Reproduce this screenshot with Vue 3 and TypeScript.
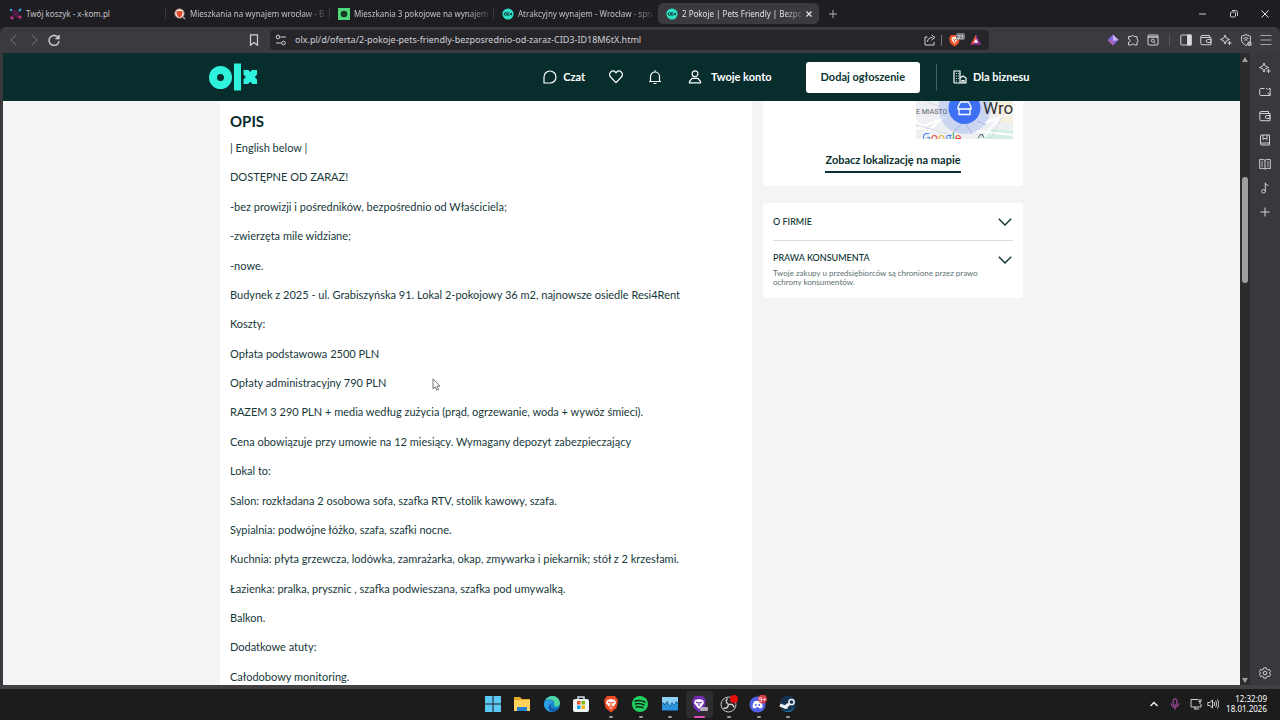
<script setup lang="ts">
interface Tab {
  title: string
  icon: 'xkom' | 'brave' | 'square' | 'olx'
  active?: boolean
}

const tabs: Tab[] = [
  { title: 'Twój koszyk - x-kom.pl', icon: 'xkom' },
  { title: 'Mieszkania na wynajem wrocław - Br', icon: 'brave' },
  { title: 'Mieszkania 3 pokojowe na wynajem:', icon: 'square' },
  { title: 'Atrakcyjny wynajem - Wrocław - spra', icon: 'olx' },
  { title: '2 Pokoje | Pets Friendly | Bezpoś', icon: 'olx', active: true },
]

const url = 'olx.pl/d/oferta/2-pokoje-pets-friendly-bezposrednio-od-zaraz-CID3-ID18M6tX.html'

const description: string[] = [
  '| English below |',
  'DOSTĘPNE OD ZARAZ!',
  '-bez prowizji i pośredników, bezpośrednio od Właściciela;',
  '-zwierzęta mile widziane;',
  '-nowe.',
  'Budynek z 2025 - ul. Grabiszyńska 91. Lokal 2-pokojowy 36 m2, najnowsze osiedle Resi4Rent',
  'Koszty:',
  'Opłata podstawowa 2500 PLN',
  'Opłaty administracyjny 790 PLN',
  'RAZEM 3 290 PLN + media według zużycia (prąd, ogrzewanie, woda + wywóz śmieci).',
  'Cena obowiązuje przy umowie na 12 miesiący. Wymagany depozyt zabezpieczający',
  'Lokal to:',
  'Salon: rozkładana 2 osobowa sofa, szafka RTV, stolik kawowy, szafa.',
  'Sypialnia: podwójne łóżko, szafa, szafki nocne.',
  'Kuchnia: płyta grzewcza, lodówka, zamrażarka, okap, zmywarka i piekarnik; stół z 2 krzesłami.',
  'Łazienka: pralka, prysznic , szafka podwieszana, szafka pod umywalką.',
  'Balkon.',
  'Dodatkowe atuty:',
  'Całodobowy monitoring.',
]
</script>

<template>
  <div class="desktop">
    <nav class="tabs" aria-label="Karty">
      <button v-for="tab in tabs" :key="tab.title" class="tab" :class="{ active: tab.active }">
        <svg v-if="tab.icon === 'xkom'" class="fav" viewBox="0 0 12 12">
          <path d="M1 1l4 5-4 5M11 1L7 6l4 5" fill="none" stroke="#3a2146" stroke-width="2" />
          <path d="M0 2h2M9 3l2-2" stroke="#27b8d8" stroke-width="2" />
          <path d="M4 2l4 8M1 8l-1 2M8 3l-4 6" stroke="#5b1a4d" stroke-width="2" />
          <path d="M1 9l2 2M9 8l2 2" stroke="#e0358c" stroke-width="2" />
        </svg>
        <svg v-else-if="tab.icon === 'brave'" class="fav" viewBox="0 0 12 12">
          <circle cx="5.5" cy="5.5" r="4.6" fill="#f4efed" stroke="#b8968a" stroke-width="1" />
          <path d="M3 3h5l.6 1.4L7.7 8 5.500 9.500 3.300 8 2.400 4.400z" fill="#df4b2b" />
          <path d="M9 9l2 2" stroke="#c4a79d" stroke-width="1.200" />
        </svg>
        <svg v-else-if="tab.icon === 'square'" class="fav" viewBox="0 0 12 12">
          <path d="M0 0h12v12H0z" fill="#4fd97a" />
          <circle cx="6" cy="6" r="3.300" fill="#153b26" />
        </svg>
        <svg v-else class="fav" viewBox="0 0 12 12">
          <circle cx="6" cy="6" r="5.600" fill="#2ee0c6" />
          <circle cx="3.600" cy="6" r="1.400" fill="none" stroke="#06302e" stroke-width="1" />
          <path d="M6 4v4M7.500 5l2.500 2.200M10 5L7.500 7.200" stroke="#06302e" stroke-width="1" />
        </svg>
        <span class="tab-title">{{ tab.title }}</span>
        <svg v-if="tab.active" class="close" viewBox="0 0 8 8">
          <path d="M1.500 1.500l5 5M6.500 1.500l-5 5" stroke="#e6e6e8" stroke-width="1.200" />
        </svg>
      </button>
      <button class="new-tab" aria-label="Nowa karta">
        <svg viewBox="0 0 8 8" width="8" height="8"><path d="M4 0v8M0 4h8" stroke="#aeadb2" stroke-width="1" /></svg>
      </button>
      <div class="window-buttons">
        <button aria-label="Minimalizuj"><svg viewBox="0 0 8 8"><path d="M0 4h7" stroke="#c9c9cc" /></svg></button>
        <button aria-label="Przywróć">
          <svg viewBox="0 0 8 8"><rect x=".5" y="2" width="5" height="5" rx="1" fill="none" stroke="#c9c9cc" /><path d="M2 .5h3.500a2 2 0 0 1 2 2V6" fill="none" stroke="#c9c9cc" /></svg>
        </button>
        <button aria-label="Zamknij"><svg viewBox="0 0 8 8"><path d="M.5.5l7 7M7.500.5l-7 7" stroke="#e0e0e2" /></svg></button>
      </div>
    </nav>

    <div class="toolbar">
      <div class="nav-buttons">
        <button class="ic" aria-label="Wstecz"><svg viewBox="0 0 12 12"><path d="M8 1L3 6l5 5" stroke="#77767b" /></svg></button>
        <button class="ic" aria-label="Dalej"><svg viewBox="0 0 12 12"><path d="M4 1l5 5-5 5" stroke="#77767b" /></svg></button>
        <button class="ic" aria-label="Odśwież"><svg viewBox="0 0 12 12"><path d="M10.500 4.200A5 5 0 1 0 11 7M11 1v3.500H7.500" stroke-width="1.400" /></svg></button>
      </div>
      <button class="ic bookmark" aria-label="Zakładka"><svg viewBox="0 0 12 12"><path d="M2.500.8h7v10.500L6 8.500l-3.500 2.800z" stroke-width="1.200" /></svg></button>
      <div class="address">
        <svg class="tune" viewBox="0 0 12 12"><circle cx="3" cy="3" r="1.800" /><path d="M5.500 3H11M1 9h5" /><circle cx="8.500" cy="9" r="1.800" /></svg>
        <input :value="url" aria-label="Adres strony" spellcheck="false" />
        <svg class="share" viewBox="0 0 12 12"><path d="M3.500 3H1v8h9V8M3.500 8c0-3 2-4.500 5-4.500M7.500 1L11 3.500 7.500 6.200" /></svg>
        <i class="bar"></i>
        <svg class="shield" viewBox="0 0 17 14">
          <path d="M3 2h7l2 3-1.300 5.500L6.500 13.500 2.300 10.500 1 5z" fill="#e8532b" />
          <path d="M4 4.500l2.500-1L9 4.500l.6 2.200-1.600 2-1.500 2-1.500-2-1.600-2z" fill="#fff0e8" />
          <path d="M5 6l1 .8M8 6l-1 .8M6.500 7v2" stroke="#e8532b" />
          <rect x="8" y="0" width="9" height="7" rx="2" fill="#77777c" />
          <text x="9" y="5.500" font-size="6" fill="#fff" stroke="none">21</text>
        </svg>
        <svg class="bat" viewBox="0 0 12 12">
          <path d="M6 .8L.5 10.800h11z" fill="#8b2d8f" /><path d="M6 .8L.5 10.800 6 8z" fill="#f0503a" /><path d="M6 4.800L3.800 8.800h4.400z" fill="#fff" />
        </svg>
      </div>
      <div class="extensions">
        <button class="ic" aria-label="Rozszerzenie"><svg viewBox="0 0 12 12"><path d="M6 .5L11.500 6 6 11.500.5 6z" fill="#8464dc" stroke="none" /><path d="M6 .5L11.500 6 6 7z" fill="#c7b2f6" stroke="none" /><path d="M.5 6L6 7v4.500z" fill="#b8629f" stroke="none" /></svg></button>
        <button class="ic" aria-label="Rozszerzenia"><svg viewBox="0 0 12 12"><path d="M1.500 2.500h2.700a1.600 1.600 0 0 1 3 0h2.800v2.600a1.500 1.500 0 0 1 0 2.900v3H7.300a1.500 1.500 0 0 0-2.900 0H1.500V8.300a1.600 1.600 0 0 0 0-3.200z" /></svg></button>
        <button class="ic" aria-label="Szukaj na stronie"><svg viewBox="0 0 12 12"><rect x="1" y="1" width="10" height="10" rx="1" /><path d="M1 3h10" stroke-width="1.500" /><circle cx="5.800" cy="6.600" r="1.500" /><path d="M7 8l1.400 1.400" /></svg></button>
        <i class="bar dim"></i>
        <button class="ic" aria-label="Panel boczny"><svg viewBox="0 0 12 12"><rect x=".8" y="1" width="10.400" height="10" rx="1" /><path d="M7.500 1h3.700v10H7.500z" fill="#dedee0" /></svg></button>
        <button class="ic" aria-label="Portfel"><svg viewBox="0 0 12 12"><path d="M9.500 3.500V1.500H2a1 1 0 0 0 0 2h9v7.200H1.800a1 1 0 0 1-1-1V2.500M11 5.500H7.800a1.500 1.500 0 0 0 0 3H11z" /></svg></button>
        <button class="ic" aria-label="Leo"><svg viewBox="0 0 12 12"><path d="M5 1l1.300 3.200L9.500 5.500 6.300 6.800 5 10 3.700 6.800.5 5.500l3.200-1.300zM9.500 7v4M7.500 9h4" /></svg></button>
        <button class="ic" aria-label="VPN"><svg viewBox="0 0 12 12"><path d="M6 .6l4.500 1.700v3.500C10.500 8.500 8 10.500 6 11.400 4 10.500 1.500 8.500 1.500 5.800V2.300z" /><path d="M3.500 4.500q2.500-1.800 5 0M4.500 6.200q1.500-1 3 0" /><circle cx="9.500" cy="9.800" r="2.200" fill="#cfcfd2" stroke="none" /><path d="M8.500 9.800h2" stroke="#444" /></svg></button>
        <button class="ic" aria-label="Menu"><svg viewBox="0 0 12 12"><path d="M.5 1.500h11M.5 6h11M.5 10.500h11" stroke="#a5a4a9" /></svg></button>
      </div>
    </div>

    <div class="body">
      <div class="page">
        <header class="site-header">
          <div class="header-inner">
            <a href="#" class="logo" aria-label="Strona główna">
              <svg viewBox="0 0 48 28" width="48" height="28">
                <circle cx="11.500" cy="14.500" r="7.500" fill="none" stroke="#2ff2dc" stroke-width="8" />
                <path d="M25 .5h7v27h-7z" fill="#2ff2dc" />
                <path d="M35 7h4.500l1.700 2 1.800-2H48v4.500L45.700 14l2.300 2.500V21h-4.500l-2.200-2.200L39 21h-4.500v-4.500l2.300-2.500-2.300-2.500V7z" fill="#2ff2dc" />
              </svg>
            </a>
            <nav class="site-nav" aria-label="Konto">
              <a href="#" class="chat"><svg viewBox="0 0 14 14"><path d="M1 13V7a6 6 0 1 1 6 6z" /></svg>Czat</a>
              <a href="#" class="heart" aria-label="Obserwowane"><svg viewBox="0 0 14 14"><path d="M7 12.600L1.600 7A3.400 3.400 0 0 1 1.800 2 3.300 3.300 0 0 1 6.300 2L7 2.800 7.700 2a3.300 3.300 0 0 1 4.500 0 3.400 3.400 0 0 1 .2 5z" /></svg></a>
              <a href="#" class="bell" aria-label="Powiadomienia"><svg viewBox="0 0 14 14"><path d="M1 11.500h12M2.500 11.500V6.500a4.500 4.500 0 0 1 9 0v5M7 2V.3M5.500 13.500h3" /></svg></a>
              <a href="#" class="account"><svg viewBox="0 0 14 14"><circle cx="7" cy="3.800" r="2.900" /><path d="M1.500 12.800v-1.300l2.600-3.200h5.800l2.600 3.200v1.300z" /></svg>Twoje konto</a>
              <button class="post">Dodaj ogłoszenie</button>
              <i class="rule"></i>
              <a href="#" class="business"><svg viewBox="0 0 14 14"><path d="M1 13V1h6v12M1 13h12V8l-3-2-3 2M3 3.500h.8M5 3.500h.8M3 6h.8M5 6h.8M3 8.500h.8M5 8.500h.8M3 11h.8M9 13v-2.500h2V13" /></svg>Dla biznesu</a>
            </nav>
          </div>
        </header>

        <main class="columns">
          <section class="description">
            <h1>OPIS</h1>
            <div class="lines">
              <p v-for="line in description" :key="line">{{ line }}</p>
            </div>
          </section>

          <aside class="side">
            <section class="card location">
              <svg class="map" viewBox="0 0 97 38" width="97" height="38" role="img" aria-label="Mapa">
                <path d="M0 0h97v38H0z" fill="#eef0f3" />
                <path d="M60 38L75 28l22 2v8z" fill="#d3efe2" />
                <path d="M78 0h19v22H84z" fill="#f6f1df" />
                <path d="M0 28l30-12M5 38l22-22M0 20l18 18M62 24l35-12M66 38L82 18M60 30l37 4" stroke="#fff" stroke-width="2" />
                <path d="M0 24l36 10M74 38l16-28M10 0l14 6" stroke="#d6dae4" fill="none" />
                <circle cx="48.500" cy="7" r="26" fill="#7899ee" fill-opacity=".3" />
                <path d="M38 30l8-7M50 23l6 10M61 20l9 4" stroke="#a8b6d9" />
                <circle cx="48.500" cy="7" r="16" fill="#3d70f2" />
                <path d="M43 7v6.500h11V7M42 6l2.500-5h8L55 6v2H42z" fill="none" stroke="#fff" stroke-width="1.300" />
                <text x="0" y="13" font-size="7" class="map-label" fill="#5c6068">E MIASTO</text>
                <text x="67" y="13" font-size="17" class="map-city" fill="#303134">Wro</text>
                <text x="6" y="41" font-size="12" class="map-brand"><tspan fill="#4285f4">G</tspan><tspan fill="#ea4335">o</tspan><tspan fill="#e8b21a">o</tspan><tspan fill="#4285f4">g</tspan><tspan fill="#34a853">l</tspan><tspan fill="#ea4335">e</tspan></text>
                <path d="M62 37l3-4 2 2M66 33l2 4" fill="none" stroke="#5f6368" />
              </svg>
              <a href="#" class="map-link">Zobacz lokalizację na mapie</a>
            </section>
            <section class="card info">
              <button class="row">
                <span class="row-title">O FIRMIE</span>
                <svg class="chevron" viewBox="0 0 14 8"><path d="M.8.8L7 7 13.200.8" /></svg>
              </button>
              <button class="row second">
                <span>
                  <span class="row-title">PRAWA KONSUMENTA</span>
                  <span class="row-note">Twoje zakupy u przedsiębiorców są chronione przez prawo ochrony konsumentów.</span>
                </span>
                <svg class="chevron" viewBox="0 0 14 8"><path d="M.8.8L7 7 13.200.8" /></svg>
              </button>
            </section>
          </aside>
        </main>
        <svg class="cursor" viewBox="0 0 9 13" width="9" height="13"><path d="M1 .8v10l2.300-2 1.500 3.400 1.700-.8L5 8.200h3z" fill="#fff" stroke="#666" stroke-width=".9" /></svg>
      </div>

      <div class="scrollbar">
        <svg viewBox="0 0 6 5"><path d="M3 0l3 5H0z" /></svg>
        <i class="before"></i><i class="thumb"></i><i class="after"></i>
        <svg viewBox="0 0 6 5"><path d="M0 0h6L3 5z" /></svg>
      </div>

      <nav class="sidebar" aria-label="Panel boczny">
        <button class="ic" aria-label="Leo"><svg viewBox="0 0 12 12"><path d="M5 1l1.300 3.200L9.500 5.500 6.300 6.800 5 10 3.700 6.800.5 5.500l3.200-1.300zM9.500 7v4M7.500 9h4" /></svg></button>
        <button class="ic" aria-label="Rozmowa"><svg viewBox="0 0 12 12"><path d="M5.500 2.500h-4l-.8.8v5.400l.8.800h9.700v-7H10L8.500 4M8.500 7l2.500 1.500M7 2.500h1" /></svg></button>
        <button class="ic" aria-label="Portfel"><svg viewBox="0 0 12 12"><path d="M9.500 3.500V1.500H2a1 1 0 0 0 0 2h9v7.200H1.800a1 1 0 0 1-1-1V2.500M11 5.500H7.800a1.500 1.500 0 0 0 0 3H11z" /></svg></button>
        <button class="ic" aria-label="Zakładki"><svg viewBox="0 0 12 12"><path d="M10.500 11H2.500a1 1 0 0 1-1-1V2a1 1 0 0 1 1-1h8v10M1.500 9h9M4 1v4.500L6 4.200l2 1.300V1" /></svg></button>
        <button class="ic" aria-label="Lista do czytania"><svg viewBox="0 0 12 12"><path d="M6 2.200Q3.500.8.7 1.500v9Q3.500 9.800 6 11q2.500-1.200 5.300-.5v-9Q8.500.8 6 2.200V11M2.300 4H4M2.300 6H4M2.300 8H4M8 4h1.700M8 6h1.700M8 8h1.700" /></svg></button>
        <button class="ic" aria-label="Playlista"><svg viewBox="0 0 12 12"><circle cx="4.500" cy="9.300" r="1.800" /><path d="M6.300 9.300V.8q.5 2.200 3 2.700" /></svg></button>
        <button class="ic" aria-label="Dodaj"><svg viewBox="0 0 12 12"><path d="M6 1.500v9M1.500 6h9" /></svg></button>
        <button class="ic settings" aria-label="Ustawienia"><svg viewBox="0 0 12 12"><path d="M4.800.8h2.400l.5 1.500 1.100.6 1.600-.4 1.100 2-1 1.500 1 1.500-1.100 2-1.600-.4-1.100.6-.5 1.500H4.800l-.5-1.500-1.100-.6-1.600.4-1.100-2 1-1.500-1-1.500 1.100-2 1.600.4 1.100-.6z" /><circle cx="6" cy="6" r="1.800" /></svg></button>
      </nav>
    </div>

    <footer class="taskbar">
      <div class="apps">
        <button aria-label="Start"><svg viewBox="0 0 18 18"><path d="M1 1h7.500v7.500H1zM9.500 1H17v7.500H9.500zM1 9.500h7.500V17H1zM9.500 9.500H17V17H9.500z" fill="#5bc8f4" /></svg></button>
        <button aria-label="Eksplorator plików"><svg viewBox="0 0 18 18"><path d="M1 2h6l2 2h8v12H1z" fill="#e5a823" /><path d="M1 5h16v11H1z" fill="#fbd35c" /><path d="M4 12h10v4H4z" fill="#2480cf" /></svg></button>
        <button aria-label="Edge"><svg viewBox="0 0 18 18"><circle cx="9" cy="9" r="8" fill="#1684cf" /><path d="M2 6C5-1 16-1 17 8c0 4-5 4.500-6 2 2-5-5-7-9-4z" fill="#4fd5a1" /><path d="M1 9c0-5 8-5 8-1-4 1-3 6 0 7.500L9 17C4 17 1 13 1 9z" fill="#2a9fe0" /><path d="M8 9c-1 4 3 6 7 4-1 2-3 4-6 4-5-2-4-7-1-8z" fill="#155ea8" /></svg></button>
        <button aria-label="Microsoft Store"><svg viewBox="0 0 18 18"><path d="M6 4V2h6v2" fill="none" stroke="#cfdfe8" stroke-width="1.500" /><rect x="1" y="4" width="16" height="13" rx="2" fill="#eef3f6" /><path d="M5 6h3.500v3.500H5z" fill="#f25022" /><path d="M9.500 6H13v3.500H9.500z" fill="#7fba00" /><path d="M5 10.500h3.500V14H5z" fill="#00a4ef" /><path d="M9.500 10.500H13V14H9.500z" fill="#ffb900" /></svg></button>
        <button class="running" aria-label="Brave"><svg viewBox="0 0 18 18"><path d="M5 1h8l3 4-1.500 8L9 17.500 3.500 13 2 5z" fill="#ee4b22" /><path d="M5 5l4-1 4 1 1 3-3 4-2 2-2-2-3-4z" fill="#fff" /><path d="M6 7l2 1M12 7l-2 1M9 7v4M7 11l2 1 2-1" stroke="#ee4b22" stroke-width="1.200" fill="none" /></svg></button>
        <button class="running" aria-label="Spotify"><svg viewBox="0 0 18 18"><circle cx="9" cy="9" r="8" fill="#20d160" /><path d="M4 6q5-1.500 10 1M4.500 9q4.500-1.300 8.500 1M5 12q4-1 7 .8" fill="none" stroke="#12231a" stroke-width="1.500" stroke-linecap="round" /></svg></button>
        <button class="running" aria-label="Monitor"><svg viewBox="0 0 18 18"><path d="M1 2h16v14H1z" fill="#154f86" /><path d="M1 2h16v6l-2-2-2 4-2-3-2 4-3-5-2 3-3-2z" fill="#8cd0f5" /><path d="M1 8l3 2 2-3 3 5 2-4 2 3 2-4 2 2v6H1z" fill="#2b92dc" /></svg></button>
        <button class="running current" aria-label="Brave, okno prywatne"><svg viewBox="0 0 18 18"><path d="M5 1h8l3 4-1.500 8L9 17.500 3.500 13 2 5z" fill="#6f2dae" /><path d="M5 5l4-1 4 1 1 3-3 4-2 2-2-2-3-4z" fill="#fff" /><path d="M6 7l2 1M12 7l-2 1M9 7v4" stroke="#6f2dae" stroke-width="1.200" /><rect x="10" y="12" width="8" height="4" rx="1" fill="#b5a9bd" /></svg></button>
        <button class="running" aria-label="OBS"><svg viewBox="0 0 18 18"><circle cx="8.500" cy="9.500" r="7.500" fill="#242426" stroke="#c9c9cb" /><path d="M8.500 9.500q-4-3-1-6M8.500 9.500q5-1 5.500 3M8.500 9.500q-1 5-5 3.500" fill="none" stroke="#c9c9cb" stroke-width="1.500" /><circle cx="14" cy="4" r="4" fill="#e80e0e" /></svg></button>
        <button class="running" aria-label="Discord"><svg viewBox="0 0 18 18"><circle cx="8.500" cy="9.500" r="8" fill="#5260e8" /><path d="M5 6.500q3.500-1.300 7 0 1.800 3 1.500 6-1.500 1-3 1l-.6-1.200H7.100L6.500 13.500q-1.500 0-3-1 0-3.500 1.500-6z" fill="#fff" /><circle cx="6.800" cy="10" r="1" fill="#5260e8" /><circle cx="10.200" cy="10" r="1" fill="#5260e8" /><circle cx="13.500" cy="4" r="4.500" fill="#d93a48" /><text x="9.500" y="6.500" font-size="7" fill="#fff">9+</text></svg></button>
        <button class="running" aria-label="Steam"><svg viewBox="0 0 18 18"><path d="M1 9a8 8 0 0 1 16-1c0 5-4 9-8 9-3 0-6-1.500-7-4z" fill="#16344f" /><path d="M2 13c2 3 9 6 14-2-1 4-4 6-7 6s-6-1.500-7-4z" fill="#2275ad" /><circle cx="12.500" cy="7" r="2.600" fill="#16344f" stroke="#f1f4f7" stroke-width="1.500" /><path d="M1 10l5 2 4-3" fill="none" stroke="#f1f4f7" stroke-width="3" /><circle cx="7" cy="12" r="2" fill="#f1f4f7" /></svg></button>
      </div>
      <div class="tray">
        <svg class="up" viewBox="0 0 12 12"><path d="M2.500 8L6 4.500 9.500 8" stroke="#eee" stroke-width="1.500" /></svg>
        <svg class="mic" viewBox="0 0 12 12"><rect x="4.200" y=".8" width="3.600" height="6.500" rx="1.800" stroke="#c154c4" /><path d="M2.300 5.500q0 3.700 3.700 3.700t3.700-3.700M6 9.200v2.300" stroke="#c154c4" /></svg>
        <svg viewBox="0 0 12 12"><path d="M8 1.500H1v7.500h10V6M4 11h5M5 9v2M9 1v2.500h2V1M10 3.500V6" /></svg>
        <svg viewBox="0 0 12 12"><path d="M.8 4.500h2L5.500 2v8L2.800 7.500h-2zM7 4q1.500 2 0 4M8.700 2.800q2.300 3.200 0 6.400M10.300 1.500q3.200 4.500 0 9" /></svg>
        <div class="clock"><time>12:32:09</time><time>18.01.2026</time></div>
      </div>
    </footer>
  </div>
</template>

<style>
body {
  margin: 0;
}
</style>

<style scoped>
* {
  box-sizing: border-box;
}
.desktop {
  display: flex;
  flex-direction: column;
  height: 100vh;
  overflow: hidden;
  background: #1e1d22;
  font-family: "Noto Sans", "Open Sans", sans-serif;
}
button {
  margin: 0;
  padding: 0;
  border: 0;
  background: none;
  color: inherit;
  font: inherit;
  text-align: left;
}
a {
  color: inherit;
  text-decoration: none;
}
svg {
  display: block;
  flex: none;
}
.tabs {
  display: flex;
  align-items: center;
  flex: none;
  height: 27px;
  padding-left: 2px;
}
.tab {
  display: flex;
  align-items: center;
  gap: 4px;
  flex: 0 1 164px;
  min-width: 0;
  height: 21px;
  padding: 0 6px 0 8px;
  border-radius: 5px;
  color: #c4c3c8;
  font-size: 8px;
  line-height: 12px;
  position: relative;
}
.tab:nth-child(-n+3)::after {
  content: "";
  position: absolute;
  right: 0;
  top: 5px;
  width: 1px;
  height: 11px;
  background: #3a393e;
}
.tab.active {
  flex-basis: 161px;
  background: #3b3a3f;
  color: #e4e3e7;
}
.fav {
  width: 12px;
  height: 12px;
}
.tab-title {
  flex: 1;
  min-width: 0;
  white-space: nowrap;
  mask-image: linear-gradient(to right, #000 85%, rgb(0 0 0 / 25%));
}
.tab:first-child .tab-title {
  mask-image: none;
}
.close {
  width: 8px;
  height: 8px;
}
.new-tab {
  padding: 4px;
  margin-left: 6px;
}
.window-buttons {
  display: flex;
  gap: 23px;
  margin-left: auto;
  padding-right: 11px;
}
.window-buttons svg {
  width: 8px;
  height: 8px;
  fill: none;
}
.toolbar {
  display: flex;
  align-items: center;
  flex: none;
  height: 26px;
  padding: 0 8px;
  background: #3b3a3f;
  border-radius: 6px 6px 0 0;
}
.ic svg,
.address svg,
.tray svg {
  width: 12px;
  height: 12px;
  fill: none;
  stroke: #d2d1d5;
  stroke-width: 1;
}
.nav-buttons {
  display: flex;
  gap: 8px;
}
.bookmark {
  margin-left: auto;
}
.address {
  display: flex;
  align-items: center;
  flex: 0 1 719px;
  height: 20px;
  margin-left: 10px;
  padding: 0 7px 0 5px;
  border-radius: 4px;
  background: #26252a;
}
.address input {
  flex: 1;
  min-width: 0;
  margin: 0 0 0 8px;
  padding: 0;
  border: 0;
  outline: 0;
  background: none;
  color: #d2d1d6;
  font: 9px/14px "Noto Sans", "Open Sans", sans-serif;
}
.bar {
  width: 1px;
  height: 11px;
  margin: 0 6px 0 5px;
  background: #77767b;
}
.bar.dim {
  margin: 0 2px;
  background: #58575c;
}
.address .shield {
  width: 17px;
  height: 14px;
  margin-right: 5px;
  stroke: none;
}
.address .bat {
  stroke: none;
}
.extensions {
  display: flex;
  align-items: center;
  justify-content: flex-end;
  gap: 8px;
  flex: 0 0 283px;
}
.body {
  display: flex;
  flex: 1;
  min-height: 0;
  padding-left: 3px;
  background: #39383d;
  border-bottom: 4px solid #414144;
}
.page {
  position: relative;
  display: flex;
  flex-direction: column;
  flex: 1;
  min-width: 0;
  background: #f2f4f5;
  color: #17383a;
  font-family: Lato, "Open Sans", sans-serif;
  overflow: hidden;
}
.site-header {
  flex: none;
  height: 48px;
  background: #072d2c;
  color: #fff;
}
.header-inner {
  display: flex;
  align-items: center;
  justify-content: space-between;
  max-width: 826px;
  height: 100%;
  margin: 0 auto;
  padding-right: 5px;
}
.site-nav {
  display: flex;
  align-items: center;
  font-size: 11px;
  line-height: 16px;
  font-weight: 700;
}
.site-nav a {
  display: flex;
  align-items: center;
  gap: 6px;
}
.site-nav svg {
  width: 14px;
  height: 14px;
  fill: none;
  stroke: #fff;
  stroke-width: 1.2;
}
.site-nav .heart {
  margin-left: 24px;
}
.site-nav .bell {
  margin-left: 25px;
}
.site-nav .account {
  gap: 9px;
  margin-left: 26px;
}
.post {
  height: 31px;
  margin-left: 34px;
  padding: 0 15px;
  border-radius: 3px;
  background: #fff;
  color: #0c3533;
}
.rule {
  width: 1px;
  height: 27px;
  margin: 0 16px;
  background: #47615f;
}
.columns {
  display: grid;
  grid-template-columns: 532fr 260fr;
  flex: 1;
  gap: 11px;
  width: 100%;
  max-width: 803px;
  min-height: 0;
  margin: 0 auto;
}
.description {
  display: flex;
  flex-direction: column;
  min-width: 0;
  padding: 10px 10px 0;
  background: #fff;
}
h1 {
  margin: 0 0 9px;
  font-size: 15px;
  line-height: 20px;
  font-weight: 700;
  color: #062b2b;
}
.lines {
  display: flex;
  flex-direction: column;
  justify-content: space-between;
  flex: 1;
}
.lines p {
  margin: 0;
  font-size: 11px;
  line-height: 16px;
  white-space: nowrap;
}
.side {
  min-width: 0;
}
.card {
  padding: 0 10px;
  border-radius: 0 0 3px 3px;
  background: #fff;
}
.location {
  display: flex;
  flex-direction: column;
  align-items: center;
  padding-bottom: 13px;
}
.map {
  align-self: flex-end;
}
.map-label {
  font-family: Roboto, sans-serif;
  font-weight: 400;
}
.map-city {
  font-family: Roboto, sans-serif;
  font-weight: 400;
}
.map-brand {
  font-family: "Open Sans", sans-serif;
  font-weight: 500;
}
.map-link {
  margin-top: 13px;
  padding-bottom: 3px;
  border-bottom: 2px solid #0a302f;
  color: #0a302f;
  font-size: 11px;
  line-height: 16px;
  font-weight: 700;
}
.info {
  margin-top: 17px;
  border-radius: 3px;
}
.row {
  display: flex;
  align-items: center;
  justify-content: space-between;
  width: 100%;
  height: 37px;
}
.row.second {
  align-items: flex-start;
  height: auto;
  padding: 10px 0 11px;
  border-top: 1px solid #d9dfe0;
}
.row.second .chevron {
  margin-top: 5px;
}
.row-title,
.row-note {
  display: block;
}
.row-title {
  color: #0a302f;
  font-size: 9px;
  line-height: 14px;
  font-weight: 500;
}
.row-note {
  max-width: 214px;
  margin-top: 4px;
  color: #5d7072;
  font-size: 8px;
  line-height: 9px;
}
.chevron {
  width: 14px;
  height: 8px;
  margin-right: 1px;
  fill: none;
  stroke: #0a302f;
  stroke-width: 1.4;
}
.cursor {
  position: absolute;
  left: 429px;
  top: 325px;
}
.scrollbar {
  display: flex;
  flex-direction: column;
  align-items: center;
  width: 10px;
  padding: 4px 0 2px;
  background: #2c2c2e;
}
.scrollbar svg {
  width: 6px;
  height: 5px;
  fill: #a0a0a0;
}
.before {
  flex: 114 1 0;
}
.thumb {
  flex: 106 1 0;
  width: 6px;
  border-radius: 3px;
  background: #9d9e9e;
}
.after {
  flex: 392 1 0;
}
.sidebar {
  display: flex;
  flex-direction: column;
  align-items: center;
  gap: 12px;
  width: 30px;
  padding: 9px 0 6px;
}
.settings {
  margin-top: auto;
}
.taskbar {
  display: grid;
  grid-template-columns: 1fr 322px 1fr;
  align-items: center;
  flex: none;
  height: 31px;
  padding-bottom: 1px;
  background: #1c1c1c;
}
.apps {
  grid-column: 2;
  display: flex;
  justify-content: space-between;
}
.apps button {
  position: relative;
  display: flex;
  align-items: center;
  justify-content: center;
  width: 27px;
  height: 27px;
  border-radius: 3px;
}
.apps svg {
  width: 18px;
  height: 18px;
}
.apps .running::after {
  content: "";
  position: absolute;
  left: 12px;
  bottom: 0;
  width: 4px;
  height: 2px;
  border-radius: 1px;
  background: #9b9b9b;
}
.apps .current {
  background: #2c2b2d;
}
.apps .current::after {
  left: 8px;
  width: 11px;
  background: #e04fc0;
}
.tray {
  display: flex;
  align-items: center;
  justify-content: flex-end;
  gap: 5px;
  padding-right: 13px;
}
.tray .up,
.tray .mic {
  margin-right: 4px;
}
.clock {
  display: flex;
  flex-direction: column;
  width: 43px;
  color: #fff;
  font-size: 8px;
  line-height: 10px;
  text-align: right;
}
</style>
